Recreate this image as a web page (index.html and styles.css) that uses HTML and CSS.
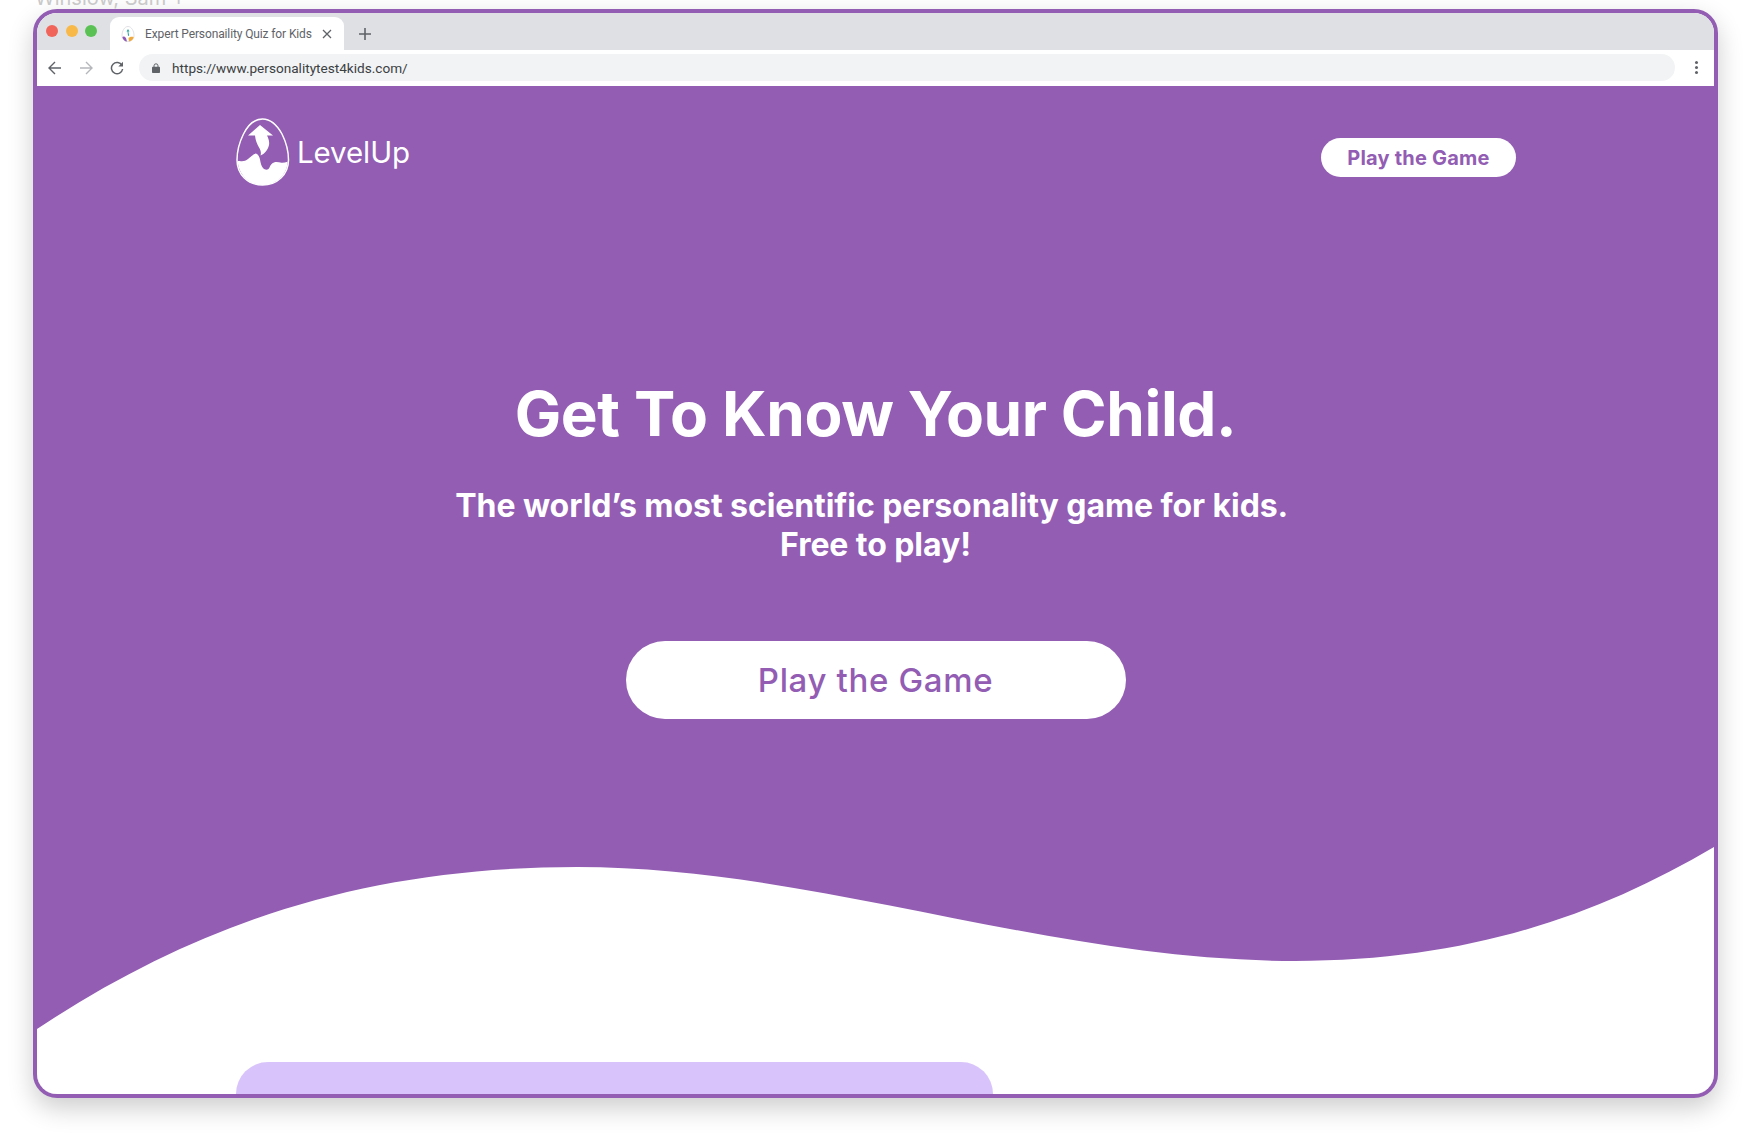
FILE: index.html
```html
<!DOCTYPE html>
<html lang="en">
<head>
<meta charset="utf-8">
<title>Expert Personaility Quiz for Kids</title>
<link rel="stylesheet" href="styles.css">
</head>
<body>
<div class="stage">
  <div class="caption">Winslow, Sam +</div>
  <div class="window">
    <div class="tabstrip">
      <div class="lights"><i class="light red"></i><i class="light amber"></i><i class="light green"></i></div>
      <div class="tab">
        <svg class="favicon" viewBox="0 0 14 16" width="14" height="16"><path d="M7 .5C3.500.5 1 5 1 9.500 1 13 3.600 15.500 7 15.500s6-2.500 6-6C13 5 10.500.5 7 .5Z" fill="#fff" stroke="#d9d9de" stroke-width=".8"/><path d="M1.300 11C2.500 10 4 10.500 5 12l1 3.500C3.700 15.500 2 13.500 1.300 11Z" fill="#8f5cb5"/><path d="M8 15.400 7.500 12c1.500-1.500 3.500-1.500 5.200-1-.5 2.500-2.400 4.200-4.700 4.400Z" fill="#f2a93b"/><path d="M7 3 5.500 5.500h1L7 10l1.200-.5-.9-4h1.200Z" fill="#2aa6a0"/></svg>
        <span class="tab-title">Expert Personaility Quiz for Kids</span>
        <svg class="tab-close" viewBox="0 0 10 10" width="10" height="10"><path d="M1 1l8 8M9 1 1 9" stroke="#5f6368" stroke-width="1.300" fill="none"/></svg>
      </div>
      <svg class="new-tab" viewBox="0 0 12 12" width="12" height="12"><path d="M6 0v12M0 6h12" stroke="#5f6368" stroke-width="1.600" fill="none"/></svg>
    </div>
    <div class="toolbar">
      <div class="nav">
        <svg viewBox="0 0 14 14" width="14" height="14"><path d="M13 7H1.500M7 1 1 7l6 6" stroke="#5f6368" stroke-width="1.400" fill="none"/></svg>
        <svg viewBox="0 0 14 14" width="14" height="14"><path d="M1 7h11.500M7 1l6 6-6 6" stroke="#b4b6ba" stroke-width="1.400" fill="none"/></svg>
        <svg viewBox="0 0 14 14" width="14" height="14"><path d="M12 4.500A5.600 5.600 0 1 0 12.600 8" stroke="#5f6368" stroke-width="1.500" fill="none"/><path d="M13 .8V5.500H8.300Z" fill="#5f6368"/></svg>
      </div>
      <div class="omnibox">
        <svg class="lock" viewBox="0 0 8 10" width="8" height="10"><path d="M2 4V2.800a2 2 0 0 1 4 0V4" stroke="#5f6368" stroke-width="1" fill="none"/><rect y="3.800" width="8" height="6.200" rx=".8" fill="#5f6368"/></svg>
        <span class="url">https://www.personalitytest4kids.com/</span>
      </div>
      <div class="kebab"><i></i><i></i><i></i></div>
    </div>
    <main class="page">
      <svg class="wave" viewBox="0 0 1677 1008" preserveAspectRatio="none"><path d="M0 943C170 830 340 781 540 781 C780 781 1010 875 1258 875 C1430 875 1560 830 1677 761V1008H0Z" fill="#fff"/></svg>
      <header class="site-header">
        <a class="logo">
          <svg class="logo-mark" viewBox="0 0 54 68" width="54" height="68">
            <path d="M26.500 1C19 1 12 7 7.500 16 3.500 24 1 33 1 42c0 14.500 11 25 25.500 25S52.500 56.500 52.500 42c0-9-2.500-18-6.500-26C41 7 34 1 26.500 1Z" fill="none" stroke="#fff" stroke-width="1.500"/>
            <path d="M3.700 43C7 43.500 9.500 43 12 41c3-2 5-5 8-5.500 2.500 1 3.500 3.500 4 6 .5 3.500 1.500 7 3 8.500 2 2 5 2.500 6.500-.5 1-2.500 2-4 4.500-5 2.500-1 5 0 7.500.2 2 .1 4-.2 6-1C51.500 56 40.500 67 26.500 67S2.500 56.500 1.700 43Z" fill="#fff"/>
            <path d="M24 7 12 17.500h7c.5 5 2 8.500 4 12 1.500 2.500 2.500 5 1.500 8 4-1.500 7.500-5.500 8.500-10.500.6-3.500-.5-6.500-2-9.500H37Z" fill="#fff"/>
          </svg>
          <span class="logo-text">LevelUp</span>
        </a>
        <a class="btn btn-small">Play the Game</a>
      </header>
      <section class="hero">
        <h1>Get To Know Your Child.</h1>
        <p>The world’s most scientific personality game for kids.&nbsp;<br>Free to play!</p>
        <a class="btn btn-large">Play the Game</a>
      </section>
      <div class="card"></div>
    </main>
  </div>
</div>
</body>
</html>
```
FILE: styles.css
```css
* { box-sizing: border-box; }
html, body { margin: 0; height: 100%; background: #fff; overflow: hidden; }
body { font-family: "Inter", "Liberation Sans", sans-serif; }
.stage { padding: 9px 40px 42px 33px; height: 1140px; position: relative; overflow: hidden; }
.caption { position: absolute; left: 35px; top: -12px; font-size: 20px; line-height: 20px; color: #c9c9c9; white-space: nowrap; }
.window {
  height: 1089px;
  border: 4px solid #925db3;
  border-radius: 24px;
  overflow: hidden;
  display: flex;
  flex-direction: column;
  background: #fff;
  box-shadow: 0 10px 26px rgba(0,0,0,.2);
}
.tabstrip { height: 37px; background: #dfe0e4; display: flex; align-items: flex-end; flex: none; }
.lights { display: flex; gap: 7.5px; padding: 0 0 13px 9px; width: 73px; }
.light { width: 12px; height: 12px; border-radius: 50%; }
.red { background: #f0645a; }
.amber { background: #f8b949; }
.green { background: #5ac254; }
.tab {
  width: 234px; height: 33px; background: #fff; border-radius: 9px 9px 0 0;
  display: flex; align-items: center; padding: 0 12px 0 11px;
  font-family: "Roboto", sans-serif; font-size: 12px; color: #5f6368;
}
.favicon { margin-right: 10px; flex: none; }
.tab-title { flex: 1; white-space: nowrap; letter-spacing: -.12px; }
.new-tab { margin: 0 0 10px 15px; }
.toolbar { height: 36px; background: #fff; display: flex; align-items: center; flex: none; padding-bottom: 1px; }
.nav { display: flex; gap: 17px; padding-left: 11px; width: 102px; }
.omnibox {
  flex: none; width: 1536px; height: 27px; background: #f1f3f4; border-radius: 14px;
  display: flex; align-items: center; padding-left: 13px;
  font-family: "Roboto", sans-serif; font-size: 13.6px; color: #3c4043;
}
.lock { margin-right: 12px; }
.url { white-space: nowrap; }
.kebab { display: flex; flex-direction: column; gap: 2px; margin-left: 20px; }
.kebab i { width: 3px; height: 3px; border-radius: 50%; background: #5f6368; }

.page { flex: 1; position: relative; background: #925db3; display: flex; flex-direction: column; overflow: hidden; }
.wave { position: absolute; inset: 0; width: 100%; height: 100%; }
.site-header {
  position: relative; display: flex; justify-content: space-between; align-items: flex-start;
  padding: 32px 198px 0 199px; flex: none;
}
.logo { display: flex; align-items: center; gap: 7px; color: #fff; }
.logo-text { font-size: 29.5px; font-weight: 400; letter-spacing: -.1px; font-family: "Inter", sans-serif; }
.btn {
  background: #fff; color: #925db3; border-radius: 999px; display: flex; align-items: center; justify-content: center;
  white-space: nowrap;
}
.btn-small { width: 195px; height: 39px; margin-top: 20px; font-size: 20px; font-weight: 700; letter-spacing: .2px; }
.hero { position: relative; display: flex; flex-direction: column; align-items: center; color: #fff; margin-top: 190px; }
.hero h1 { margin: 0; font-size: 62px; font-weight: 700; line-height: 76px; letter-spacing: -.4px; }
.hero p { margin: 34px 0 0; font-size: 32px; font-weight: 700; line-height: 39px; text-align: center; letter-spacing: -.07px; }
.btn-large { width: 500px; height: 78px; margin-top: 77px; padding-bottom: 1px; font-size: 33px; font-weight: 500; letter-spacing: .65px; }
.card { position: relative; width: 757px; height: 32px; margin: auto 0 0 199px; background: #d8c4fb; border-radius: 40px 40px 0 0; flex: none; }
```
